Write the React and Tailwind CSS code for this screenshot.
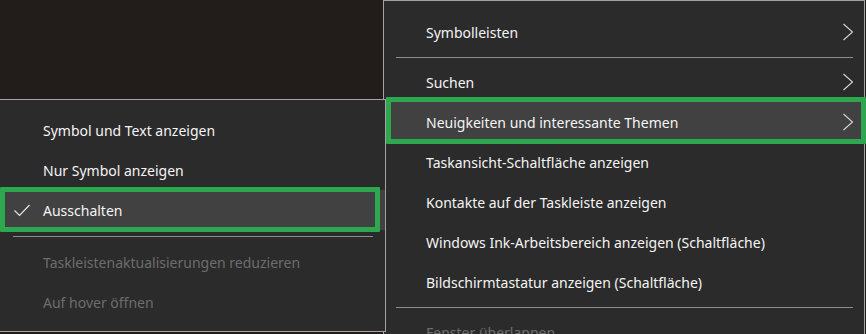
const Chevron = () => (
  <svg width="12" height="18" viewBox="0 0 12 18" className="shrink-0">
    <polyline points="1.5,1 10.5,9 1.5,17" fill="none" stroke="#d6d6d6" strokeWidth="1.1" />
  </svg>
);

const Check = () => (
  <svg width="17" height="13" viewBox="0 0 17 13">
    <polyline points="0.5,6.5 5.5,11.5 15.5,1" fill="none" stroke="#e8e8e8" strokeWidth="1.1" />
  </svg>
);

function RightItem({ label, arrow, highlighted, disabled }) {
  return (
    <div
      className={`relative h-10 flex items-center pl-[42px] pr-[10px] ${highlighted ? "bg-[#414141]" : ""} ${disabled ? "text-[#6d6d6d]" : "text-[#f4f4f4]"}`}
    >
      <span className="flex-1 whitespace-nowrap">{label}</span>
      {arrow && <Chevron />}
      {highlighted && (
        <div className="absolute left-[2px] right-[-2px] top-[-5px] bottom-[-2px] border-[5px] border-[#2ea84f] rounded-[1px]" />
      )}
    </div>
  );
}

function LeftItem({ label, checked, highlighted, disabled }) {
  return (
    <div
      className={`relative h-10 flex items-center ${highlighted ? "bg-[#414141]" : ""} ${disabled ? "text-[#6d6d6d]" : "text-[#f4f4f4]"}`}
    >
      <div className="w-[43px] h-full flex items-center pl-[14px]">{checked && <Check />}</div>
      <span className="whitespace-nowrap">{label}</span>
      {highlighted && (
        <div className="absolute left-0 right-[5px] top-[-3px] bottom-[-2px] border-[5px] border-[#2ea84f] rounded-[1px]" />
      )}
    </div>
  );
}

const Sep = ({ h, l, r }) => (
  <div className={`flex items-center ${h} ${l} ${r}`}>
    <div className="h-px w-full bg-[#8c8c8c]" />
  </div>
);

export default function App() {
  return (
    <div className="relative w-[866px] h-[334px] overflow-hidden bg-[#221c1b] text-[14px] font-['Segoe_UI','Noto_Sans',sans-serif]">
      {/* right context menu */}
      <div className="absolute left-[383px] top-0 w-[482px] h-[370px] bg-[#2b2b2b] border border-[#a3a3a3] pt-[11px]">
        <RightItem label="Symbolleisten" arrow />
        <Sep h="h-[10px]" l="pl-[12px]" r="pr-[11px]" />
        <RightItem label="Suchen" arrow />
        <RightItem label="Neuigkeiten und interessante Themen" arrow highlighted />
        <RightItem label="Taskansicht-Schaltfläche anzeigen" />
        <RightItem label="Kontakte auf der Taskleiste anzeigen" />
        <RightItem label="Windows Ink-Arbeitsbereich anzeigen (Schaltfläche)" />
        <RightItem label="Bildschirmtastatur anzeigen (Schaltfläche)" />
        <Sep h="h-[10px]" l="pl-[12px]" r="pr-[11px]" />
        <RightItem label="Fenster überlappen" disabled />
      </div>

      {/* left submenu */}
      <div className="absolute left-[-1px] top-[99px] w-[387px] h-[233px] bg-[#2b2b2b] border border-[#a3a3a3] pt-[10px] z-10">
        <LeftItem label="Symbol und Text anzeigen" />
        <LeftItem label="Nur Symbol anzeigen" />
        <LeftItem label="Ausschalten" checked highlighted />
        <Sep h="h-[12px]" l="pl-[13px]" r="pr-[12px]" />
        <LeftItem label="Taskleistenaktualisierungen reduzieren" disabled />
        <LeftItem label="Auf hover öffnen" disabled />
      </div>
    </div>
  );
}
